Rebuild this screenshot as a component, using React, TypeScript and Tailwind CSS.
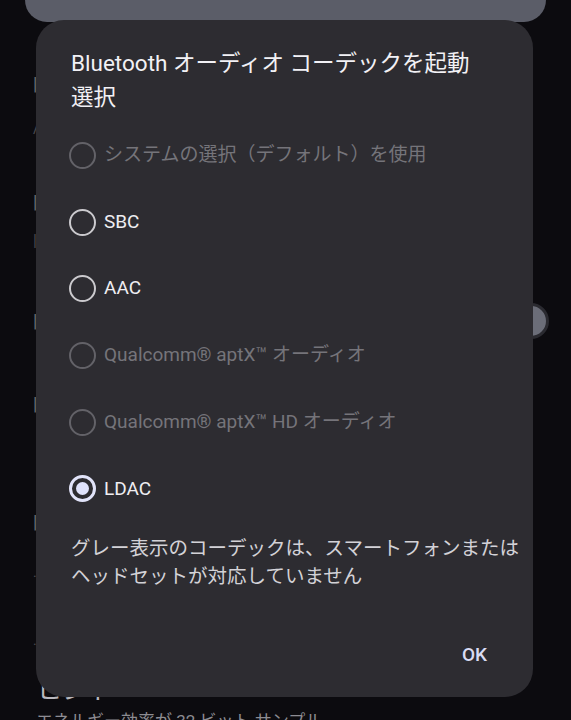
import React from "react"

type Option = { label: string; disabled?: boolean; selected?: boolean }

const options: Option[] = [
  { label: "システムの選択（デフォルト）を使用", disabled: true },
  { label: "SBC" },
  { label: "AAC" },
  { label: "Qualcomm® aptX™ オーディオ", disabled: true },
  { label: "Qualcomm® aptX™ HD オーディオ", disabled: true },
  { label: "LDAC", selected: true },
]

function Radio({ disabled, selected }: { disabled?: boolean; selected?: boolean }) {
  if (selected) {
    return (
      <span className="flex h-[27px] w-[27px] shrink-0 items-center justify-center rounded-full border-[3px] border-[#e1e3f9]">
        <span className="h-[13px] w-[13px] rounded-full bg-[#dfe2fb]" />
      </span>
    )
  }
  return (
    <span
      className={`h-[27px] w-[27px] shrink-0 rounded-full border-[2.5px] ${
        disabled ? "border-[#636268]" : "border-[#cbcace]"
      }`}
    />
  )
}

export default function App() {
  return (
    <div
      className="relative h-[720px] w-[571px] overflow-hidden bg-[#0c0b0f]"
      style={{ fontFamily: 'Roboto, "Noto Sans CJK JP", sans-serif' }}
    >
      {/* settings page behind the dialog */}
      <div className="flex flex-col">
        <div className="mx-[25px] h-[22px] rounded-b-[30px] bg-[#5b5d68]" />
        <div className="flex flex-col pl-[33px] pr-[22px] text-[#6f6e74]">
          <span className="mt-[50px] text-[18px] leading-[24px]">| オーディオ</span>
          <span className="mt-[22px] text-[16px] leading-[20px] text-[#4a494f]">/ 無効</span>
          <span className="mt-[52px] text-[18px] leading-[24px]">| コーデック</span>
          <span className="mt-[17px] text-[16px] leading-[20px] text-[#4a494f]">| LDAC</span>
          <div className="mt-[52px] flex items-center justify-between">
            <span className="text-[18px] leading-[24px]">| 絶対音量</span>
            <span className="h-[36px] w-[36px] rounded-full border-[3px] border-[#2a2a30] bg-[#6b6d78]" />
          </div>
          <span className="mt-[53px] text-[18px] leading-[24px]">| ビット</span>
          <span className="mt-[94px] text-[18px] leading-[24px]">| チャンネル</span>
          <span className="mt-[30px] text-[14px] leading-[16px] text-[#4a494f]">. ステレオ</span>
          <span className="mt-[52px] text-[14px] leading-[16px] text-[#4a494f]">. 再生</span>
          <span className="mt-[22px] pl-[3px] text-[26px] leading-[40px] text-[#b9b8be]">ヒント</span>
          <span className="whitespace-nowrap pl-[3px] text-[17px] leading-[22px] text-[#8d8c92]">
            エネルギー効率が 32 ビット サンプル
          </span>
        </div>
      </div>

      {/* dialog overlay */}
      <div className="absolute left-[36px] top-[20px] flex h-[677px] w-[497px] flex-col rounded-[28px] bg-[#2d2c31] pl-[35px] pr-[12px]">
        <h2 className="mt-[26px] text-[22.5px] leading-[34px] font-normal text-[#f2f1f5]">
          Bluetooth オーディオ コーデックを起動
          <br />
          選択
        </h2>

        <div className="mt-[8px] flex flex-col">
          {options.map((o) => (
            <div key={o.label} className="-ml-[2px] flex h-[66.7px] items-center gap-[8px]">
              <Radio disabled={o.disabled} selected={o.selected} />
              <span
                className={`whitespace-nowrap text-[19px] ${
                  o.disabled ? "text-[#75747a]" : "text-[#efeef2]"
                }`}
              >
                {o.label}
              </span>
            </div>
          ))}
        </div>

        <p className="mt-[13px] whitespace-nowrap text-[19.5px] leading-[28px] text-[#d3d2d7]">
          グレー表示のコーデックは、スマートフォンまたは
          <br />
          ヘッドセットが対応していません
        </p>

        <div className="mt-[50px] flex justify-end pr-[34px]">
          <span className="text-[19px] font-medium text-[#dadcf4]">OK</span>
        </div>
      </div>
    </div>
  )
}
